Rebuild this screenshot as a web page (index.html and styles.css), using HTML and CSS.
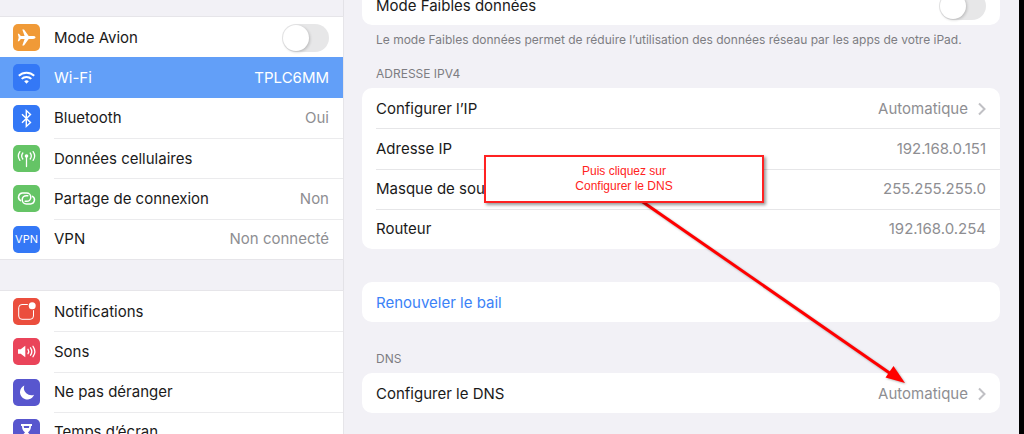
FILE: index.html
```html
<!DOCTYPE html>
<html lang="fr">
<head>
  <meta charset="UTF-8" />
  <meta name="viewport" content="width=device-width, initial-scale=1.0"/>
  <title>Réglages - Wi-Fi</title>
  <link rel="stylesheet" href="styles.css">
</head>
<body>
  <div class="screen">
    <nav class="sidebar">
      <ul class="menu menu-network">
        <li class="menu-row">
          <svg class="icon orange" viewBox="0 0 27 27"><path fill="#fff" d="M22.5 13.500c0-.9-1.200-1.400-2.500-1.400h-4.300L11 5.600H9.300l2.300 6.500H7.800L6 9.800H4.800l.9 3.700-.9 3.700H6l1.800-2.300h3.800l-2.300 6.500H11l4.700-6.500H20c1.300 0 2.500-.5 2.500-1.400z"/></svg>
          <label for="airplane">Mode Avion</label>
          <input class="switch" type="checkbox" id="airplane">
        </li>
        <li class="menu-row selected">
          <svg class="icon blue" viewBox="0 0 27 27"><g fill="none" stroke="#fff" stroke-width="2"><path d="M5.800 11.800a11 11 0 0 1 15.400 0"/><path d="M8.700 14.900a6.800 6.800 0 0 1 9.600 0"/></g><path fill="#fff" d="M13.500 19.700l-2.300-2.400a3.300 3.300 0 0 1 4.600 0z"/></svg>
          <span>Wi-Fi</span>
          <span class="value">TPLC6MM</span>
        </li>
        <li class="menu-row">
          <svg class="icon blue" viewBox="0 0 27 27"><path fill="none" stroke="#fff" stroke-width="1.400" d="M9 9.300l8.500 8.300-4.200 3.900V5.500l4.200 3.900L9 17.700"/></svg>
          <span>Bluetooth</span>
          <span class="value">Oui</span>
        </li>
        <li class="menu-row">
          <svg class="icon green" viewBox="0 0 27 27"><path fill="none" stroke="#fff" stroke-width="1.300" stroke-linecap="round" d="M13.500 11.500v10M9.800 8a5 5 0 0 0 0 6M17.200 8a5 5 0 0 1 0 6M6.900 6.600a7.600 7.600 0 0 0 0 8.800M20.100 6.600a7.600 7.600 0 0 1 0 8.800"/><circle cx="13.500" cy="11" r="1.800" fill="#fff"/></svg>
          <span>Données cellulaires</span>
        </li>
        <li class="menu-row">
          <svg class="icon green" viewBox="0 0 27 27"><g fill="none" stroke="#fff" stroke-width="1.500" stroke-linecap="round"><path d="M7.500 15.700a4.100 4.100 0 0 1 2-7.600h4.200a4.100 4.100 0 0 1 0 8.200h-1.500"/><path d="M19.500 11.300a4.100 4.100 0 0 1-2 7.600h-4.200a4.100 4.100 0 0 1 0-8.200h1.500"/></g></svg>
          <span>Partage de connexion</span>
          <span class="value">Non</span>
        </li>
        <li class="menu-row">
          <span class="icon icon-text blue">VPN</span>
          <span>VPN</span>
          <span class="value">Non connecté</span>
        </li>
      </ul>

      <ul class="menu menu-general">
        <li class="menu-row">
          <svg class="icon red" viewBox="0 0 27 27"><path fill="none" stroke="#fff" stroke-width="1" d="M14.800 6.500H9a3.300 3.300 0 0 0-3.300 3.300V18A3.300 3.300 0 0 0 9 21.300h8.200a3.300 3.300 0 0 0 3.300-3.300v-5.800"/><circle cx="19.200" cy="7.800" r="3.500" fill="#fff"/></svg>
          <span>Notifications</span>
        </li>
        <li class="menu-row">
          <svg class="icon pink" viewBox="0 0 27 27"><path fill="#fff" d="M5 11.300h2.700l4.600-3.600v11.600l-4.600-3.600H5z"/><path fill="none" stroke="#fff" stroke-width="1.300" stroke-linecap="round" d="M15 11.300a4 4 0 0 1 0 4.400M17.500 9.800a6.500 6.500 0 0 1 0 7.400M20 8.300a9 9 0 0 1 0 10.400"/></svg>
          <span>Sons</span>
        </li>
        <li class="menu-row">
          <svg class="icon indigo" viewBox="0 0 27 27"><path fill="#fff" d="M11.300 6.500a7.300 7.300 0 1 0 9.800 9.300A7.500 7.500 0 0 1 11.300 6.500z"/></svg>
          <span>Ne pas déranger</span>
        </li>
        <li class="menu-row">
          <svg class="icon indigo" viewBox="0 0 27 27"><path fill="#fff" d="M8 5h11v2h-1c0 3.500-1.300 5-3 6.500 1.700 1.500 3 3 3 6.500h1v2H8v-2h1c0-3.500 1.300-5 3-6.500C10.300 12 9 10.500 9 7H8z"/><path fill="#5856ce" d="M10.700 7h5.600l-.4 2h-4.800z"/></svg>
          <span>Temps d’écran</span>
        </li>
      </ul>
    </nav>

    <main class="content">
      <div class="card card-top">
        <div class="card-row">
          <label for="lowData">Mode Faibles données</label>
          <input class="switch" type="checkbox" id="lowData">
        </div>
      </div>
      <p class="note">Le mode Faibles données permet de réduire l’utilisation des données réseau par les apps de votre iPad.</p>

      <h2>ADRESSE IPV4</h2>
      <div class="card card-ip">
        <div class="card-row">
          <span>Configurer l’IP</span>
          <span class="value">Automatique</span>
          <svg class="chevron" viewBox="0 0 8 14"><path d="M1 1.500L6.500 7 1 12.500"/></svg>
        </div>
        <div class="card-row">
          <span>Adresse IP</span>
          <span class="value">192.168.0.151</span>
        </div>
        <div class="card-row">
          <span>Masque de sous-réseau</span>
          <span class="value">255.255.255.0</span>
        </div>
        <div class="card-row">
          <span>Routeur</span>
          <span class="value">192.168.0.254</span>
        </div>
      </div>

      <div class="card card-renew">
        <button class="card-row renew" type="button">Renouveler le bail</button>
      </div>

      <h2>DNS</h2>
      <div class="card">
        <div class="card-row">
          <span>Configurer le DNS</span>
          <span class="value">Automatique</span>
          <svg class="chevron" viewBox="0 0 8 14"><path d="M1 1.500L6.500 7 1 12.500"/></svg>
        </div>
      </div>

      <!-- Help bubble and its arrow -->
      <svg class="arrow" viewBox="0 0 270 190">
        <path d="M-14 -10L250 173" stroke="#f00" stroke-width="3"/>
        <path d="M264 182L244.500 176.500L252.500 165z" fill="#f00"/>
      </svg>
      <div class="callout">Puis cliquez sur<br>Configurer le DNS</div>
    </main>
  </div>
</body>
</html>
```
FILE: styles.css
```css
* {
  box-sizing: border-box;
}

body {
  margin: 0;
  background: #000;
  color: #1a1a1a;
  font-family: Inter, "Liberation Sans", sans-serif;
  font-size: 15px;
  line-height: 20px;
}

.screen {
  display: flex;
  height: 100vh;
  margin-right: 5px;
  background: #f2f1f6;
  overflow: hidden;
}

/* Left menu */
.sidebar {
  flex: none;
  width: 344px;
  padding-top: 17px;
  border-right: 1px solid #e3e2e7;
}

.menu {
  display: grid;
  grid-auto-rows: 1fr;
  margin: 0 0 32px;
  padding: 0;
  list-style: none;
  background: #fff;
  box-shadow: 0 0 0 1px #e6e5e9;
}

.menu-network {
  height: 242px;
}

.menu-general {
  height: 161px;
}

.menu-row {
  display: flex;
  align-items: center;
  gap: 14px;
  padding: 1px 14px 0 13px;
}

.menu-row + .menu-row {
  background: linear-gradient(#ebebed, #ebebed) 54px 0 / 100% 1px no-repeat;
}

.menu-row.selected,
.menu-row + .menu-row.selected {
  background: #629ff8;
  color: #fff;
}

.menu-row.selected + .menu-row {
  background: none;
}

.icon {
  flex: none;
  width: 27px;
  height: 27px;
  border-radius: 5px;
}

.icon-text {
  color: #fff;
  font-size: 11px;
  line-height: 27px;
  text-align: center;
}

.orange {
  background: #f09a37;
}

.blue {
  background: #3478f6;
}

.green {
  background: #65c466;
}

.red {
  background: #eb4e3d;
}

.pink {
  background: #ea445a;
}

.indigo {
  background: #5856ce;
}

.value {
  margin-left: auto;
  color: #8e8e92;
}

.selected .value {
  color: #fff;
}

.switch {
  appearance: none;
  display: flex;
  width: 47px;
  height: 28px;
  margin: 0 0 0 auto;
  padding: 1px;
  border-radius: 14px;
  background: #e7e7e8;
}

.switch::before {
  content: "";
  width: 26px;
  height: 26px;
  border-radius: 50%;
  background: #fff;
  box-shadow: 1px 1px 3px rgba(0, 0, 0, 0.2);
}

.switch:checked {
  justify-content: flex-end;
  background: #65c466;
}

/* Right panel */
.content {
  position: relative;
  flex: 1;
  padding: 0 19px 0 18px;
}

.card {
  display: grid;
  grid-auto-rows: 1fr;
  min-height: 40px;
  border-radius: 10px;
  background: #fff;
  overflow: hidden;
}

.card-top {
  margin-top: -15px;
}

.card-ip {
  height: 161px;
}

.card-renew {
  margin: 33px 0 29px;
}

.card-row {
  display: flex;
  align-items: center;
  padding: 1px 14px 0;
}

.card-row + .card-row {
  background: linear-gradient(#e6e6e8, #e6e6e8) 14px 0 / 100% 1px no-repeat;
}

.renew {
  border: none;
  background: none;
  color: #3b82f7;
  font: inherit;
  cursor: pointer;
}

.chevron {
  width: 8px;
  height: 14px;
  margin-left: 10px;
  fill: none;
  stroke: #c0c0c4;
  stroke-width: 2;
}

.note {
  margin: 7px 14px 18px;
  color: #7d7d82;
  font-size: 12px;
  line-height: 16px;
}

h2 {
  margin: 0 14px 6px;
  color: #7d7d82;
  font-size: 12px;
  font-weight: normal;
  line-height: 16px;
}

.callout {
  position: absolute;
  top: 155px;
  left: 140px;
  width: 280px;
  padding: 7px 0;
  border: 2px solid #f22;
  background: #fff;
  box-shadow: 2px 2px 3px rgba(0, 0, 0, 0.4);
  color: #f22;
  font-family: "Liberation Sans", Arial, sans-serif;
  font-size: 12px;
  line-height: 15px;
  text-align: center;
}

.arrow {
  position: absolute;
  top: 201px;
  left: 297px;
  width: 270px;
  height: 190px;
  overflow: visible;
  filter: drop-shadow(1px 1px 1px rgba(0, 0, 0, 0.3));
}
```
